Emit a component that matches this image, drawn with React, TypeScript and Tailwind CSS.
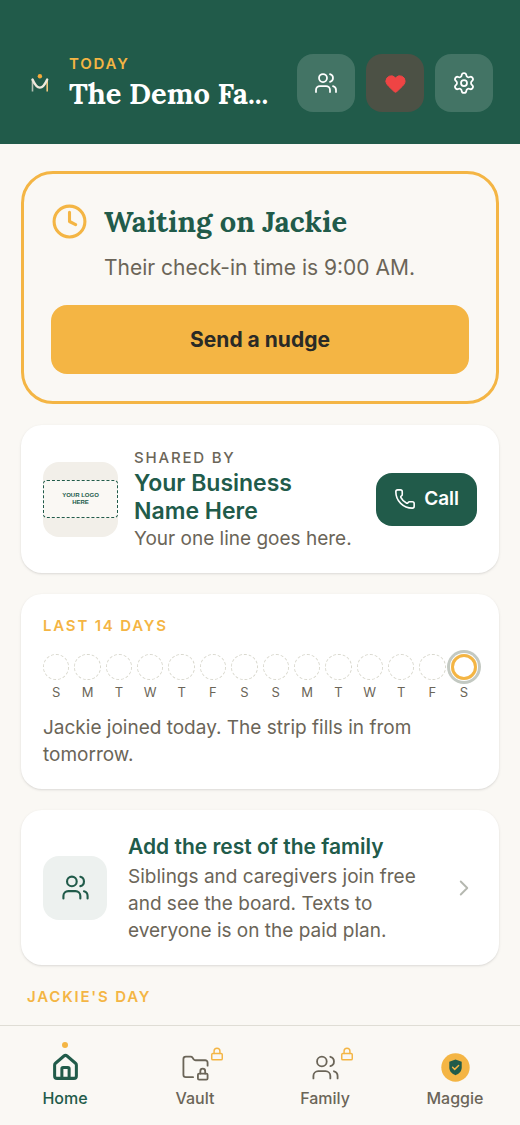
import { ChevronRight, Clock, FolderLock, Heart, House, Lock, Phone, Settings, Users } from "lucide-react"

const days = ["S", "M", "T", "W", "T", "F", "S", "S", "M", "T", "W", "T", "F", "S"]

function Logo() {
  return (
    <svg viewBox="0 0 26 26" className="size-[26px] shrink-0" fill="none" aria-hidden="true">
      <path d="M5.5 9.5v12" stroke="#b3c0b3" strokeWidth="1.6" />
      <path d="M20.2 9.5v12" stroke="#efc67d" strokeWidth="1.6" />
      <path d="M5.5 9.5C7.5 14 9.500 17.600 12.900 17.600s5.300-3.600 7.300-8.100" stroke="#ede8dc" strokeWidth="2.4" strokeLinecap="round" />
      <circle cx="12.9" cy="6.200" r="2.200" fill="#f4a93a" />
    </svg>
  )
}

function Header() {
  const button = "flex size-[58px] items-center justify-center rounded-2xl"
  return (
    <header className="flex items-center gap-4 bg-[#215b4a] px-[27px] pt-[53px] pb-[31px]">
      <Logo />
      <div className="min-w-0 flex-1">
        <p className="text-[15px] leading-[22px] font-semibold tracking-[0.12em] text-[#f4b544]">TODAY</p>
        <h1 className="truncate font-['Lora','Liberation_Serif',serif] text-[29px] leading-[38px] font-bold text-white">
          The Demo Fa...
        </h1>
      </div>
      <div className="flex shrink-0 gap-[11px]">
        <button aria-label="Family members" className={`${button} bg-[#437465] text-white`}>
          <Users size={24} strokeWidth={1.75} />
        </button>
        <button aria-label="Emergency" className={`${button} bg-[#4c5145] text-[#ef4444]`}>
          <Heart size={23} fill="currentColor" strokeWidth={1} />
        </button>
        <button aria-label="Settings" className={`${button} bg-[#437465] text-white`}>
          <Settings size={24} strokeWidth={1.75} />
        </button>
      </div>
    </header>
  )
}

function CheckIn() {
  return (
    <section className="rounded-[32px] border-3 border-[#f4b544] p-[27px]">
      <div className="flex gap-4">
        <Clock size={37} className="mt-0.5 shrink-0 text-[#f4b544]" />
        <div>
          <h2 className="font-['Lora','Liberation_Serif',serif] text-[29px] leading-[42px] font-bold text-[#215b4a]">
            Waiting on Jackie
          </h2>
          <p className="mt-2 text-[21px] leading-[34px] text-[#6b6558]">Their check-in time is 9:00 AM.</p>
        </div>
      </div>
      <button className="mt-5 h-[69px] w-full rounded-2xl bg-[#f4b544] text-[21px] font-bold text-[#2a2a26]">
        Send a nudge
      </button>
    </section>
  )
}

function Sponsor() {
  return (
    <section className="flex items-center gap-4 rounded-[21px] bg-white px-[22px] py-[21px] shadow-sm">
      <div className="flex size-[75px] shrink-0 items-center overflow-hidden rounded-2xl bg-[#f2efe9]">
        <div className="flex h-[38px] w-full items-center justify-center rounded-sm border border-dashed border-[#215b4a] bg-[#faf8f4] text-center font-['Liberation_Sans',sans-serif] text-[6px] leading-[7px] font-bold text-[#215b4a]">
          YOUR LOGO
          <br />
          HERE
        </div>
      </div>
      <div className="min-w-0 flex-1">
        <p className="text-[15px] leading-[23px] font-medium tracking-[0.12em] text-[#6b6558]">SHARED BY</p>
        <h3 className="text-[23px] leading-7 font-semibold text-balance text-[#215b4a]">Your Business Name Here</h3>
        <p className="text-[19px] leading-[27px] text-[#6b6558]">Your one line goes here.</p>
      </div>
      <a href="tel:" className="flex h-[53px] shrink-0 items-center gap-2 rounded-2xl bg-[#215b4a] px-[18px] text-[19px] font-semibold text-white">
        <Phone size={22} strokeWidth={1.75} />
        Call
      </a>
    </section>
  )
}

function History() {
  return (
    <section className="rounded-[21px] bg-white px-[22px] py-[21px] shadow-sm">
      <h3 className="text-[15px] leading-[22px] font-semibold tracking-[0.12em] text-[#f4b544]">LAST 14 DAYS</h3>
      <ol className="mt-[17px] grid grid-cols-14 gap-[5px]">
        {days.map((day, i) => (
          <li key={i} className="text-center text-[13px] leading-4 text-[#6b6558]">
            <span
              className={
                i === days.length - 1
                  ? "mb-1 block h-[26px] rounded-full border-3 border-[#f4b544] ring-3 ring-[#c3c9c2] ring-offset-1"
                  : "mb-1 block h-[26px] rounded-full border border-dashed border-[#d9d8ce]"
              }
            />
            {day}
          </li>
        ))}
      </ol>
      <p className="mt-[14px] text-[19px] leading-[27px] text-[#6b6558]">
        Jackie joined today. The strip fills in from tomorrow.
      </p>
    </section>
  )
}

function Invite() {
  return (
    <a href="#family" className="flex items-center gap-[21px] rounded-[21px] bg-white px-[22px] py-[21px] shadow-sm">
      <div className="flex size-16 shrink-0 items-center justify-center rounded-2xl bg-[#edf1ef] text-[#215b4a]">
        <Users size={29} strokeWidth={1.75} />
      </div>
      <div className="min-w-0 flex-1">
        <h3 className="text-[21px] leading-8 font-semibold text-[#215b4a]">Add the rest of the family</h3>
        <p className="text-[19px] leading-[27px] text-[#6b6558]">
          Siblings and caregivers join free and see the board. Texts to everyone is on the paid plan.
        </p>
      </div>
      <ChevronRight size={26} strokeWidth={1.75} className="shrink-0 text-[#b5b8b0]" />
    </a>
  )
}

function MaggieBadge() {
  return (
    <svg viewBox="0 0 28 28" className="size-[29px]" aria-hidden="true">
      <circle cx="14" cy="14" r="13.7" fill="#f4b544" />
      <path d="M14 6.200l6 2.200v5.600c0 3.600-2.400 6-6 7.400-3.600-1.400-6-3.800-6-7.400V8.400z" fill="#215b4a" />
      <path d="M11.2 13.800l2 2 3.800-3.800" stroke="#f4b544" strokeWidth="1.4" fill="none" strokeLinecap="round" strokeLinejoin="round" />
    </svg>
  )
}

function BottomNav() {
  const item = "flex flex-col items-center gap-1 pt-[27px] text-base leading-6 font-medium"
  return (
    <nav className="sticky bottom-0 grid h-[100px] shrink-0 grid-cols-4 border-t border-[#dfddd5] bg-[#faf8f4] text-[#6b6558]">
      <a href="#home" className={`${item} text-[#215b4a]`}>
        <span className="relative">
          <span className="absolute -top-[11px] left-1/2 size-[6px] -translate-x-1/2 rounded-full bg-[#f4b544]" />
          <House size={29} strokeWidth={2.5} />
        </span>
        Home
      </a>
      <a href="#vault" className={item}>
        <span className="relative">
          <FolderLock size={29} strokeWidth={1.5} />
          <Lock size={14} strokeWidth={2.5} className="absolute -top-1.5 -right-3.5 text-[#f4b544]" />
        </span>
        Vault
      </a>
      <a href="#family" className={item}>
        <span className="relative">
          <Users size={29} strokeWidth={1.5} />
          <Lock size={14} strokeWidth={2.5} className="absolute -top-1.5 -right-3.5 text-[#f4b544]" />
        </span>
        Family
      </a>
      <a href="#maggie" className={item}>
        <MaggieBadge />
        Maggie
      </a>
    </nav>
  )
}

export default function App() {
  return (
    <div className="flex min-h-screen flex-col bg-[#faf8f4] font-['Inter',sans-serif]">
      <Header />
      <main className="flex flex-1 flex-col gap-[21px] px-[21px] pt-[27px]">
        <CheckIn />
        <Sponsor />
        <History />
        <Invite />
        <h2 className="px-[6px] text-[15px] leading-[22px] font-semibold tracking-[0.12em] text-[#f4b544]">JACKIE'S DAY</h2>
      </main>
      <BottomNav />
    </div>
  )
}
